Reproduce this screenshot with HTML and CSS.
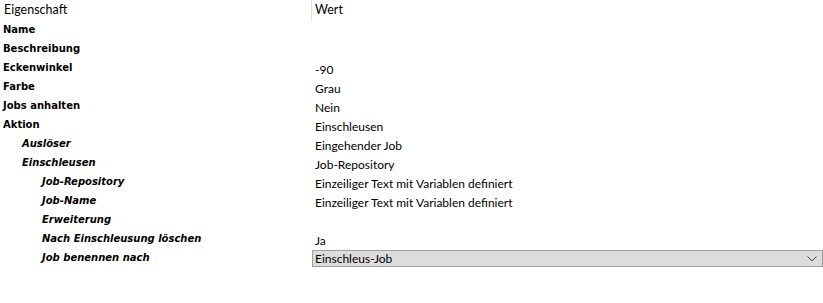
FILE: index.html
```html
<!DOCTYPE html>
<html>
<head>
<title>Eigenschaften</title>
<link rel="stylesheet" href="styles.css">
</head>
<body>

<div class="grid">
    <div class="headCell">Eigenschaft</div>
    <div class="headCell headValue">Wert</div>

    <div class="label">Name</div><div class="value"></div>
    <div class="label">Beschreibung</div><div class="value"></div>
    <div class="label">Eckenwinkel</div><div class="value">-90</div>
    <div class="label">Farbe</div><div class="value">Grau</div>
    <div class="label">Jobs anhalten</div><div class="value">Nein</div>
    <div class="label">Aktion</div><div class="value">Einschleusen</div>
    <div class="label sub1">Auslöser</div><div class="value">Eingehender Job</div>
    <div class="label sub1">Einschleusen</div><div class="value">Job-Repository</div>
    <div class="label sub2">Job-Repository</div><div class="value">Einzeiliger Text mit Variablen definiert</div>
    <div class="label sub2">Job-Name</div><div class="value">Einzeiliger Text mit Variablen definiert</div>
    <div class="label sub2">Erweiterung</div><div class="value"></div>
    <div class="label sub2">Nach Einschleusung löschen</div><div class="value">Ja</div>
    <div class="label sub2">Job benennen nach</div>
    <div class="value selectCell">
        <div class="selectBox">
            <span>Einschleus-Job</span>
            <svg width="10" height="6" viewBox="0 0 10 6"><path d="M0.5 0.5 L5 5 L9.5 0.5" fill="none" stroke="#444" stroke-width="1"/></svg>
        </div>
    </div>
</div>

</body>
</html>
```
FILE: styles.css
```css
body{
    margin:0;
    background:#ffffff;
    color:#000;
    font-family:Lato, "Liberation Sans", sans-serif;
}
.grid{
    display:grid;
    grid-template-columns:311px 1fr;
    grid-template-rows:20px repeat(13, 19px);
}
.headCell{
    font-size:12.5px;
    line-height:20px;
    padding-left:4px;
}
.headValue{
    border-left:1px solid #e3e3e3;
    padding-left:3px;
    height:21px;
}
.label{
    font-family:"DejaVu Sans", sans-serif;
    font-weight:bold;
    font-size:10px;
    line-height:19px;
    padding-left:3px;
    white-space:nowrap;
}
.sub1{
    font-style:italic;
    padding-left:22px;
}
.sub2{
    font-style:italic;
    padding-left:42px;
}
.value{
    font-size:12px;
    line-height:19px;
    padding-top:2px;
    padding-left:4px;
    white-space:nowrap;
}
.selectCell{
    padding:2px 0 0 1px;
}
.selectBox{
    height:15px;
    border:1px solid #a0a0a0;
    background:#dcdcdc;
    display:flex;
    align-items:center;
    justify-content:space-between;
    padding:0 5px 0 2px;
    line-height:15px;
}
```
